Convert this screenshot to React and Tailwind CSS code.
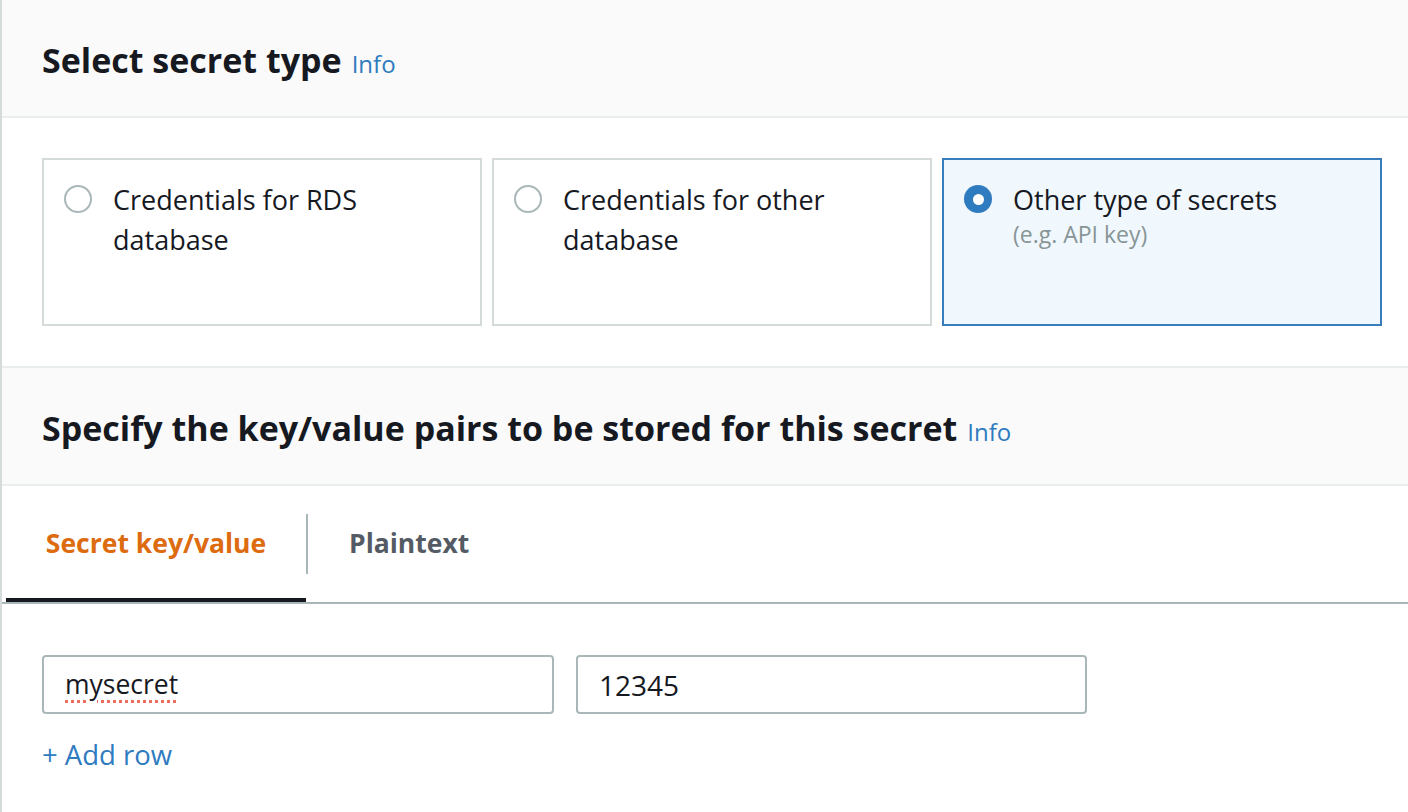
import React from "react";

function Radio({ checked }) {
  if (checked) {
    return (
      <span className="mt-[5px] flex h-[28px] w-[28px] shrink-0 items-center justify-center rounded-full bg-[#2f7bbf]">
        <span className="h-[11px] w-[11px] rounded-full bg-white" />
      </span>
    );
  }
  return <span className="mt-[5px] h-[28px] w-[28px] shrink-0 rounded-full border-2 border-[#aab7b8] bg-white" />;
}

function Card({ title, sub, checked }) {
  return (
    <div
      className={
        "flex h-[168px] w-[440px] gap-[21px] border-2 px-[20px] pt-[20px] " +
        (checked ? "border-[#3a7dbc] bg-[#f1f8fd]" : "border-[#d5dbdb] bg-white")
      }
    >
      <Radio checked={checked} />
      <div className="flex flex-col">
        <div className="text-[27px] leading-[40px] text-[#16191f]">{title}</div>
        {sub && <div className="-mt-[2px] text-[23px] leading-[32px] text-[#879596]">{sub}</div>}
      </div>
    </div>
  );
}

function Header({ children }) {
  return (
    <div className="flex h-[118px] items-center border-b-2 border-[#eaeded] bg-[#fafafa] pl-[40px] pt-[4px]">
      <h2 className="text-[34px] font-bold leading-[40px] text-[#16191f]">{children}</h2>
      <span className="ml-[10px] mt-[7px] text-[24px] leading-[40px] text-[#2f7bbf]">Info</span>
    </div>
  );
}

export default function App() {
  return (
    <div className="min-h-screen border-l-2 border-[#d5dbdb] bg-white font-['Open_Sans',sans-serif]">
      <Header>Select secret type</Header>
      <div className="flex gap-[10px] border-b-2 border-[#eaeded] py-[40px] pl-[40px]">
        <Card title={<>Credentials for RDS<br />database</>} />
        <Card title={<>Credentials for other<br />database</>} />
        <Card title="Other type of secrets" sub="(e.g. API key)" checked />
      </div>
      <Header>Specify the key/value pairs to be stored for this secret</Header>
      <div className="flex h-[118px] items-stretch border-b-2 border-[#aab7b8] pl-[4px]">
        <div className="flex w-[300px] items-center justify-center border-b-4 border-[#16191f] pt-[4px] text-[26.5px] font-bold text-[#dd6b10]">
          Secret key/value
        </div>
        <div className="h-[60px] w-[2px] self-center bg-[#aab7b8]" />
        <div className="flex items-center pl-[41px] pr-[42px] text-[26.5px] font-bold text-[#545b64]">Plaintext</div>
      </div>
      <div className="pl-[40px] pt-[51px]">
        <div className="flex gap-[22px]">
          <div className="flex h-[59px] w-[512px] items-center rounded-[4px] border-2 border-[#aab7b8] pl-[21px] text-[26.5px] text-[#16191f]">
            <span className="underline decoration-[#e8705c] decoration-dotted decoration-[3px] underline-offset-[6px]">mysecret</span>
          </div>
          <div className="flex h-[59px] w-[511px] items-center rounded-[4px] border-2 border-[#aab7b8] pl-[21px] text-[28px] text-[#16191f]">
            12345
          </div>
        </div>
        <div className="mt-[23px] text-[27.5px] leading-[36px] text-[#2f7bbf]">+ Add row</div>
      </div>
    </div>
  );
}
